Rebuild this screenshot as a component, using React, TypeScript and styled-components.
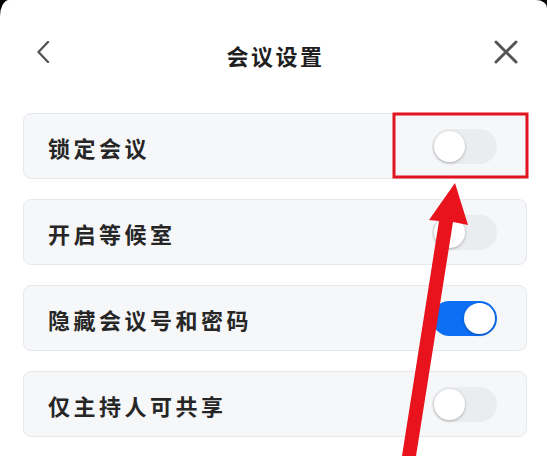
import React from "react";
import styled, { createGlobalStyle } from "styled-components";

const Global = createGlobalStyle`
  html, body { margin: 0; padding: 0; background: #000; }
  body { font-family: "Noto Sans CJK SC", "Noto Sans", sans-serif; }
`;

const Screen = styled.div`
  position: relative;
  width: 547px;
  height: 456px;
  background: #ffffff;
  border-top-left-radius: 9px 16px;
  border-top-right-radius: 11px 8px;
  overflow: hidden;
  display: flex;
  flex-direction: column;
`;

const Header = styled.div`
  display: flex;
  align-items: center;
  justify-content: space-between;
  height: 40px;
  margin-top: 32px;
  padding: 0 28px 0 30px;
`;

const IconButton = styled.div`
  width: 26px;
  height: 26px;
  display: flex;
  align-items: center;
  justify-content: center;
`;

const Title = styled.div`
  font-size: 22px;
  font-weight: 700;
  letter-spacing: 2.5px;
  color: #1f1f1f;
  margin-top: 6px;
  margin-left: 2px;
`;

const List = styled.div`
  display: flex;
  flex-direction: column;
  gap: 20px;
  margin-top: 41px;
  padding: 0 20px 0 23px;
`;

const Card = styled.div`
  height: 66px;
  box-sizing: border-box;
  background: #f6f7f9;
  border: 1px solid #e7e8eb;
  border-radius: 8px;
  display: flex;
  align-items: center;
  justify-content: space-between;
  padding: 0 29px 0 24px;
`;

const Label = styled.div`
  font-size: 22px;
  font-weight: 700;
  letter-spacing: 3.5px;
  color: #262626;
  margin-top: 2px;
`;

const Track = styled.div<{ $on: boolean }>`
  width: 65px;
  height: 35px;
  border-radius: 18px;
  background: ${(p) => (p.$on ? "#0b6ef3" : "#eaecef")};
  display: flex;
  align-items: center;
  justify-content: ${(p) => (p.$on ? "flex-end" : "flex-start")};
  padding: 0 2px;
  box-sizing: border-box;
`;

const Knob = styled.div`
  width: 31px;
  height: 31px;
  border-radius: 50%;
  background: #ffffff;
  box-shadow: 0 1px 3px rgba(0, 0, 0, 0.28);
`;

const Overlay = styled.svg`
  position: absolute;
  left: 0;
  top: 0;
  pointer-events: none;
`;

const rows = [
  { label: "锁定会议", on: false },
  { label: "开启等候室", on: false },
  { label: "隐藏会议号和密码", on: true },
  { label: "仅主持人可共享", on: false },
];

export default function App() {
  return (
    <>
      <Global />
      <Screen>
        <Header>
          <IconButton>
            <svg width="14" height="22" viewBox="0 0 14 22">
              <path d="M12 1 L2.5 11 L12 21" fill="none" stroke="#555" strokeWidth="2.4" strokeLinecap="round" strokeLinejoin="round" />
            </svg>
          </IconButton>
          <Title>会议设置</Title>
          <IconButton>
            <svg width="24" height="24" viewBox="0 0 24 24">
              <path d="M2 2 L22 22 M22 2 L2 22" fill="none" stroke="#555" strokeWidth="3" strokeLinecap="round" />
            </svg>
          </IconButton>
        </Header>
        <List>
          {rows.map((r) => (
            <Card key={r.label}>
              <Label>{r.label}</Label>
              <Track $on={r.on}>
                <Knob />
              </Track>
            </Card>
          ))}
        </List>
        <Overlay width="547" height="456" viewBox="0 0 547 456">
          <rect x="394" y="114" width="133" height="63" fill="none" stroke="#e0151f" strokeWidth="3" />
          <polygon
            points="455,183 468,225 453,222 416,456 402,456 439,221 429,220"
            fill="#e8131d"
          />
        </Overlay>
      </Screen>
    </>
  );
}
